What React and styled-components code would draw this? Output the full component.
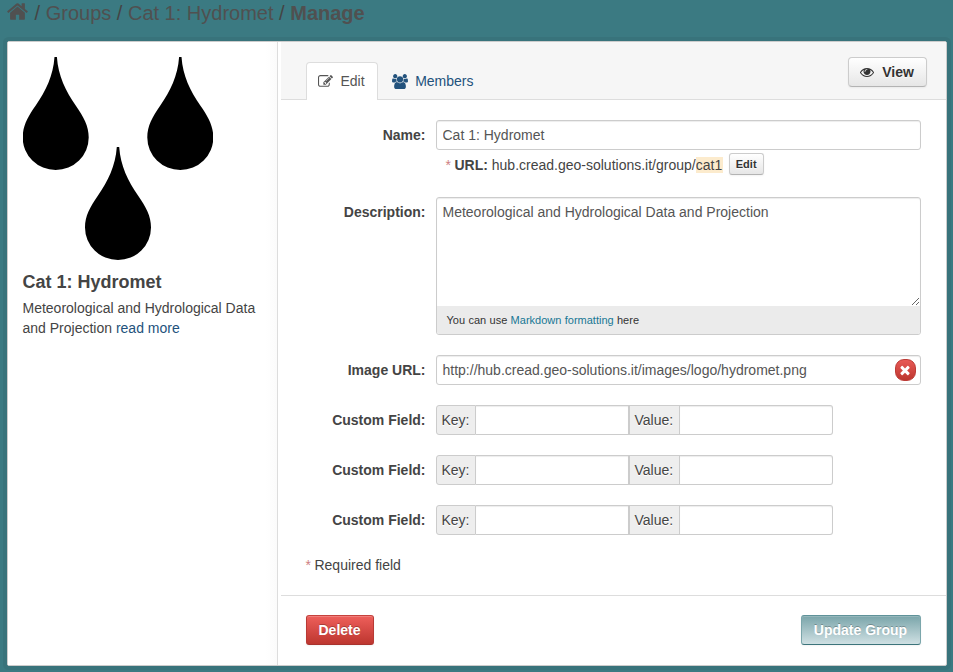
import React from "react";
import styled, { createGlobalStyle, css } from "styled-components";

const GlobalStyle = createGlobalStyle`
  * { box-sizing: border-box; }
  body {
    margin: 0;
    background: #3b7a82;
    font: 14px/20px "Liberation Sans", Arial, sans-serif;
    color: #444;
  }
  input, textarea, button { font: inherit; margin: 0; }
`;

const Page = styled.div`
  height: 672px;
  padding: 0 6px 0 7px;
  overflow: hidden;
`;

const Breadcrumb = styled.nav`
  display: flex;
  height: 41px;
  padding-top: 1px;
  font-size: 20px;
  line-height: 24px;
  white-space: pre;
  color: #505050;
`;

const Separator = styled.span`
  color: #444;
`;

const Icon = styled.svg`
  display: block;
  flex: none;
  width: ${(p) => p.$w}px;
  height: ${(p) => p.$h || p.$w}px;
  fill: currentColor;
`;

const HomeIcon = styled(Icon)`
  margin: -1px 0 0 -1px;
`;

const Panel = styled.main`
  display: flex;
  height: 625px;
  background: #fff;
  border: 1px solid #ccc;
  border-radius: 2px;
  box-shadow: 0 0 0 4px rgba(0, 0, 0, 0.05);
`;

const Sidebar = styled.aside`
  width: 270px;
  padding: 15px;
  border-right: 1px solid #ddd;
  background: linear-gradient(to right, #fff 258px, #fbfbfb);
`;

const Logo = styled.svg`
  display: block;
  width: 190px;
  height: 204px;
`;

const GroupTitle = styled.h1`
  margin: 10px 0 4px -0.5px;
  font-size: 18px;
  line-height: 23px;
`;

const Summary = styled.p`
  margin: 0 0 0 -0.5px;
  white-space: nowrap;
`;

const Link = styled.a`
  color: ${(p) => p.$color || "#23527c"};
  text-decoration: none;
`;

const Primary = styled.section`
  flex: 1;
  margin-left: 3px;
`;

const Header = styled.header`
  display: flex;
  justify-content: space-between;
  align-items: flex-start;
  height: 58px;
  padding: 15px 19px 0 25px;
  background: #f6f6f6;
  border-bottom: 1px solid #ddd;
`;

const Tabs = styled.div`
  display: flex;
  padding-top: 5px;
`;

const Tab = styled.a`
  display: flex;
  align-items: center;
  gap: 7px;
  height: 38px;
  padding: 0 12px 1px 13px;
  border: 1px solid transparent;
  border-bottom: 0;
  border-radius: 4px 4px 0 0;
  color: #23527c;
  ${(p) =>
    p.$active &&
    css`
      gap: 7.5px;
      padding: 0 12.5px 1px 11px;
      background: #fff;
      border-color: #ddd;
      color: #555;
    `}
`;

const buttonKinds = {
  plain: css`
    color: #333;
    border-color: #ccc #ccc #b3b3b3;
    background: linear-gradient(#fff, #e6e6e6);
    text-shadow: 0 1px 1px rgba(255, 255, 255, 0.75);
  `,
  danger: css`
    color: #fff;
    border-color: #c5423d #b83a35 #a8322d;
    background: linear-gradient(#ee5f5b, #bd362f);
    text-shadow: 0 -1px 0 rgba(0, 0, 0, 0.25);
  `,
  primary: css`
    color: #fff;
    border-color: #5f9299 #7ba6ab #3c747b;
    background: linear-gradient(#7aa5aa, #cfe0e3);
    text-shadow: 0 -1px 0 rgba(0, 0, 0, 0.25);
  `,
};

const Button = styled.button`
  display: flex;
  align-items: center;
  justify-content: center;
  gap: 8px;
  flex: none;
  width: ${(p) => p.$w}px;
  height: 30px;
  padding: 0 1px 0 0;
  border: 1px solid;
  border-radius: 4px;
  font-weight: bold;
  box-shadow: inset 0 1px 0 rgba(255, 255, 255, 0.2), 0 1px 2px rgba(0, 0, 0, 0.05);
  ${(p) => buttonKinds[p.$kind || "plain"]}
  ${(p) => p.$kind && css`border-radius: 3px;`}
  ${(p) =>
    p.$small &&
    css`
      height: 22px;
      padding: 0;
      font-size: 11px;
      line-height: 16px;
      border-radius: 3px;
    `}
`;

const Form = styled.form`
  display: flex;
  flex-direction: column;
  gap: 20px;
  height: 495px;
  padding: 20px 25px 0;
`;

const Field = styled.div`
  display: grid;
  grid-template-columns: 119.5px 485px;
  column-gap: 10.5px;
  align-items: start;
`;

const Label = styled.label`
  padding-top: 5px;
  text-align: right;
  font-weight: bold;
`;

const boxed = css`
  border: 1px solid #ccc;
  border-radius: 3px;
  background: #fff;
  color: #555;
  outline: 0;
  box-shadow: inset 0 1px 1px rgba(0, 0, 0, 0.075);
`;

const Input = styled.input`
  ${boxed}
  display: block;
  width: 100%;
  height: 30px;
  padding: 4px 5.5px;
`;

const UrlRow = styled.div`
  display: flex;
  align-items: center;
  height: 22px;
  margin: 3px 0 2px 9.5px;
  white-space: pre;
`;

const UrlText = styled.span`
  padding-top: 2px;
`;

const Star = styled.span`
  color: #cd7f82;
  padding-right: 3.5px;
`;

const Slug = styled.span`
  height: 16px;
  line-height: 17px;
  margin: 1px 5.5px 0 0;
  padding-right: 1px;
  background: #fcebcd;
`;

const Editor = styled.div`
  ${boxed}
  height: 138px;
  overflow: hidden;
`;

const TextArea = styled.textarea`
  display: block;
  width: 100%;
  height: 108px;
  padding: 4px 5.5px;
  border: 0;
  outline: 0;
  background: transparent;
  color: inherit;
  resize: vertical;
`;

const Hint = styled.div`
  height: 28px;
  padding: 0 9.5px;
  background: #ebebeb;
  color: #333;
  font-size: 11px;
  line-height: 28px;
  word-spacing: 0.3px;
`;

const ImageBox = styled.div`
  ${boxed}
  display: flex;
  align-items: center;
  justify-content: space-between;
  height: 30px;
  padding: 0 4px 0 5.5px;
`;

const Remove = styled.button`
  display: flex;
  align-items: center;
  justify-content: center;
  width: 21px;
  height: 22px;
  padding: 0 1px 0 0;
  border: 1px solid #bd3c37;
  border-radius: 9px;
  background: linear-gradient(#e85a56, #bd362f);
  color: #fff;
`;

const PairBox = styled.div`
  display: flex;
  height: 30px;
`;

const AddOn = styled.span`
  width: ${(p) => p.$w}px;
  padding: 4px 0 4px 4.5px;
  border: 1px solid #ccc;
  border-radius: ${(p) => (p.$first ? "3px 0 0 3px" : "0")};
  background: #eee;
  text-shadow: 0 1px 0 #fff;
`;

const PairInput = styled(Input)`
  width: 153px;
  border-left: 0;
  border-radius: ${(p) => (p.$last ? "0 3px 3px 0" : "0")};
`;

const Required = styled.p`
  margin: 0 0 0 -0.5px;
`;

const Actions = styled.footer`
  display: flex;
  justify-content: space-between;
  padding: 19px 25px 0;
  border-top: 1px solid #ddd;
`;

const paths = {
  home: "M1472 992v480q0 26-19 45t-45 19h-384v-384h-256v384h-384q-26 0-45-19t-19-45v-480q0-1 .5-3t.5-3l575-474 575 474q1 2 1 6zm223-69l-62 74q-8 9-21 11h-3q-13 0-21-7l-692-577-692 577q-12 8-24 7-13-2-21-11l-62-74q-8-10-7-23.5t11-21.5l719-599q32-26 76-26t76 26l244 204v-195q0-14 9-23t23-9h192q14 0 23 9t9 23v408l219 182q10 8 11 21.5t-7 23.5z",
  edit: "M888 1184l116-116-152-152-116 116v56h96v96h56zm440-720q-16-16-33 1l-350 350q-17 17-1 33t33-1l350-350q17-17 1-33zm80 594v190q0 119-84.5 203.5t-203.5 84.5h-832q-119 0-203.5-84.5t-84.5-203.5v-832q0-119 84.5-203.5t203.5-84.5h832q63 0 117 25 15 7 18 23 3 17-9 29l-49 49q-14 14-32 8-23-6-45-6h-832q-66 0-113 47t-47 113v832q0 66 47 113t113 47h832q66 0 113-47t47-113v-126q0-13 9-22l64-64q15-15 35-7t20 29zm-96-738l288 288-672 672h-288v-288zm444 132l-92 92-288-288 92-92q28-28 68-28t68 28l152 152q28 28 28 68t-28 68z",
  users: "M529 896q-162 5-265 128h-134q-82 0-138-40.5t-56-118.5q0-353 124-353 6 0 43.5 21t97.5 42.5 119 21.5q67 0 133-23-5 37-5 66 0 139 81 256zm1071 637q0 120-73 189.5t-194 69.5h-874q-121 0-194-69.5t-73-189.5q0-53 3.5-103.5t14-109 26.5-108.5 43-97.5 62-81 85.5-53.5 111.5-20q10 0 43 21.5t73 48 107 48 135 21.5 135-21.5 107-48 73-48 43-21.5q61 0 111.5 20t85.5 53.5 62 81 43 97.5 26.5 108.5 14 109 3.5 103.5zm-1024-1277q0 106-75 181t-181 75-181-75-75-181 75-181 181-75 181 75 75 181zm704 384q0 159-112.5 271.5t-271.5 112.5-271.5-112.5-112.5-271.5 112.5-271.5 271.5-112.5 271.5 112.5 112.5 271.5zm576 225q0 78-56 118.5t-138 40.5h-134q-103-123-265-128 81-117 81-256 0-29-5-66 66 23 133 23 59 0 119-21.5t97.5-42.5 43.5-21q124 0 124 353zm-128-609q0 106-75 181t-181 75-181-75-75-181 75-181 181-75 181 75 75 181z",
  eye: "M1664 960q-152-236-381-353 61 104 61 225 0 185-131.5 316.5t-316.5 131.5-316.5-131.5-131.5-316.5q0-121 61-225-229 117-381 353 133 205 333.5 326.5t434.5 121.5 434.5-121.5 333.5-326.5zm-720-384q0-20-14-34t-34-14q-125 0-214.5 89.5t-89.5 214.5q0 20 14 34t34 14 34-14 14-34q0-86 61-147t147-61q20 0 34-14t14-34zm848 384q0 34-20 69-140 230-376.5 368.5t-499.5 138.5-499.5-139-376.5-368q-20-35-20-69t20-69q140-229 376.5-368t499.5-139 499.5 139 376.5 368q20 35 20 69z",
  remove: "M1490 1322q0 40-28 68l-136 136q-28 28-68 28t-68-28l-294-294-294 294q-28 28-68 28t-68-28l-136-136q-28-28-28-68t28-68l294-294-294-294q-28-28-28-68t28-68l136-136q28-28 68-28t68 28l294 294 294-294q28-28 68-28t68 28l136 136q28 28 28 68t-28 68l-294 294 294 294q28 28 28 68z",
};

const DROP =
  "M-1.2 0C-2.5 19-10 34-20 48.500C-28 60-33 69-33 80.500A33 32.500 0 0 0 33 80.500C33 69 28 60 20 48.500C10 34 2.500 19 1.200 0Z";

function CustomField() {
  return (
    <Field>
      <Label>Custom Field:</Label>
      <PairBox>
        <AddOn $w={40} $first>Key:</AddOn>
        <PairInput />
        <AddOn $w={51}>Value:</AddOn>
        <PairInput $last />
      </PairBox>
    </Field>
  );
}

export default function App() {
  return (
    <Page>
      <GlobalStyle />
      <Breadcrumb>
        <HomeIcon $w={23} $h={23} viewBox="0 0 1792 1792"><path d={paths.home} /></HomeIcon>
        <Separator> / </Separator>
        <span>Groups</span>
        <Separator> / </Separator>
        <span>Cat 1: Hydromet</span>
        <Separator> / </Separator>
        <strong>Manage</strong>
      </Breadcrumb>
      <Panel>
        <Sidebar>
          <Logo viewBox="0 0 190 204">
            <path d={DROP} transform="translate(32.700 0)" />
            <path d={DROP} transform="translate(157.300 0)" />
            <path d={DROP} transform="translate(95 90)" />
          </Logo>
          <GroupTitle>Cat 1: Hydromet</GroupTitle>
          <Summary>
            Meteorological and Hydrological Data
            <br />
            and Projection <Link>read more</Link>
          </Summary>
        </Sidebar>
        <Primary>
          <Header>
            <Tabs>
              <Tab $active>
                <Icon $w={15} viewBox="0 0 1792 1792"><path d={paths.edit} /></Icon>
                Edit
              </Tab>
              <Tab>
                <Icon $w={16} $h={15} viewBox="-64 0 1920 1792"><path d={paths.users} /></Icon>
                Members
              </Tab>
            </Tabs>
            <Button $w={79} type="button">
              <Icon $w={14} viewBox="0 0 1792 1792"><path d={paths.eye} /></Icon>
              View
            </Button>
          </Header>
          <Form>
            <Field>
              <Label>Name:</Label>
              <div>
                <Input defaultValue="Cat 1: Hydromet" />
                <UrlRow>
                  <UrlText>
                    <Star>*</Star>
                    <strong>URL:</strong>
                    {" hub.cread.geo-solutions.it/group/"}
                  </UrlText>
                  <Slug>cat1</Slug>
                  <Button $w={35} $small type="button">Edit</Button>
                </UrlRow>
              </div>
            </Field>
            <Field>
              <Label>Description:</Label>
              <Editor>
                <TextArea defaultValue="Meteorological and Hydrological Data and Projection" />
                <Hint>
                  You can use <Link $color="#187794">Markdown formatting</Link> here
                </Hint>
              </Editor>
            </Field>
            <Field>
              <Label>Image URL:</Label>
              <ImageBox>
                <span>http://hub.cread.geo-solutions.it/images/logo/hydromet.png</span>
                <Remove type="button">
                  <Icon $w={14} viewBox="0 0 1792 1792"><path d={paths.remove} /></Icon>
                </Remove>
              </ImageBox>
            </Field>
            <CustomField />
            <CustomField />
            <CustomField />
            <Required><Star>*</Star>Required field</Required>
          </Form>
          <Actions>
            <Button $w={68} $kind="danger" type="button">Delete</Button>
            <Button $w={120} $kind="primary" type="button">Update Group</Button>
          </Actions>
        </Primary>
      </Panel>
    </Page>
  );
}
